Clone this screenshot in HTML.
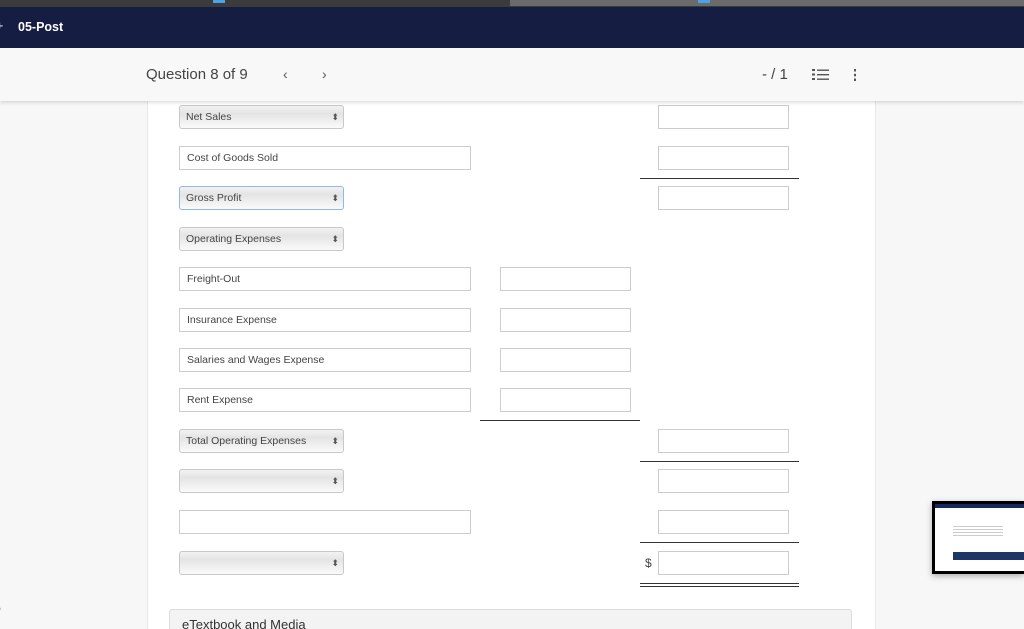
<!DOCTYPE html>
<html><head><meta charset="utf-8"><style>
html,body{margin:0;width:1024px;height:629px;overflow:hidden}
body{background:#f7f7f7;font-family:"Liberation Sans",sans-serif;position:relative}
.a{position:absolute}
.strip{left:0;top:0;width:1024px;height:7px;background:#3b3b3b}
.nav{left:0;top:7px;width:1024px;height:41px;background:#151d42;color:#fff;font-size:12.5px;font-weight:bold}
.hdr{left:0;top:48px;width:1024px;height:53px;background:#f8f8f8;box-shadow:0 2px 3px rgba(0,0,0,.12);z-index:3}
.panel{left:147px;top:100px;width:727px;height:529px;background:#fff;border-left:1px solid #e8e8e8;border-right:1px solid #e8e8e8}
.sel{height:22px;border:1px solid #c8c8c8;border-radius:3px;background:linear-gradient(#f2f2f2,#e4e4e4 35%,#fafafa);font-size:10.5px;color:#444;line-height:22px;padding-left:6px;box-sizing:content-box;width:157px}
.sel:after{content:"⬍";position:absolute;right:4px;top:0;font-size:9px;color:#555}
.txt{height:22px;border:1px solid #ccc;font-size:10.5px;color:#444;line-height:22px;padding-left:7px;box-sizing:content-box;width:283px;background:#fff}
.in{width:129px;height:22px;border:1px solid #ccc;background:#fff}
.ln{height:1px;background:#333}
</style></head><body>
<div class="a strip"></div>
<div class="a" style="left:510px;top:0;width:514px;height:6px;background:#6b6b6b"></div>
<div class="a" style="left:213px;top:0;width:12px;height:3px;background:#4aa3e8"></div>
<div class="a" style="left:698px;top:0;width:12px;height:3px;background:#4aa3e8"></div>
<div class="a nav"><span class="a" style="left:-4px;top:12px;font-weight:normal">+</span><span class="a" style="left:18px;top:13px">05-Post</span></div>
<div class="a hdr">
<span class="a" style="left:146px;top:18px;font-size:15px;color:#444">Question 8 of 9</span>
<span class="a" style="left:283px;top:18px;font-size:14px;color:#555">‹</span>
<span class="a" style="left:322px;top:18px;font-size:14px;color:#555">›</span>
<span class="a" style="left:762px;top:18px;font-size:15px;color:#444">- / 1</span>
<svg class="a" style="left:811px;top:20px" width="18" height="14"><g fill="#555"><rect x="6" y="1.5" width="12" height="1.4"/><rect x="6" y="6" width="12" height="1.4"/><rect x="6" y="10.5" width="12" height="1.4"/><rect x="1" y="1" width="3" height="2"/><rect x="1" y="5.5" width="3" height="2"/><rect x="1" y="10" width="3" height="2"/></g></svg>
<svg class="a" style="left:853px;top:20px" width="4" height="14"><g fill="#555"><rect x="1" y="1" width="2" height="2.5"/><rect x="1" y="5.8" width="2" height="2.5"/><rect x="1" y="10.5" width="2" height="2.5"/></g></svg>
</div>
<div class="a panel"></div>

<div class="a sel" style="left:179px;top:105px">Net Sales</div>
<div class="a in" style="left:658px;top:105px"></div>
<div class="a txt" style="left:179px;top:146px">Cost of Goods Sold</div>
<div class="a in" style="left:658px;top:146px"></div>
<div class="a ln" style="left:640px;top:178px;width:159px"></div>
<div class="a sel" style="left:179px;top:186px;border-color:#8fb8e8">Gross Profit</div>
<div class="a in" style="left:658px;top:186px"></div>
<div class="a sel" style="left:179px;top:227px">Operating Expenses</div>
<div class="a txt" style="left:179px;top:267px">Freight-Out</div>
<div class="a in" style="left:500px;top:267px"></div>
<div class="a txt" style="left:179px;top:308px">Insurance Expense</div>
<div class="a in" style="left:500px;top:308px"></div>
<div class="a txt" style="left:179px;top:348px">Salaries and Wages Expense</div>
<div class="a in" style="left:500px;top:348px"></div>
<div class="a txt" style="left:179px;top:388px">Rent Expense</div>
<div class="a in" style="left:500px;top:388px"></div>
<div class="a ln" style="left:480px;top:420px;width:160px"></div>
<div class="a sel" style="left:179px;top:429px">Total Operating Expenses</div>
<div class="a in" style="left:658px;top:429px"></div>
<div class="a ln" style="left:640px;top:461px;width:159px"></div>
<div class="a sel" style="left:179px;top:469px"></div>
<div class="a in" style="left:658px;top:469px"></div>
<div class="a txt" style="left:179px;top:510px"></div>
<div class="a in" style="left:658px;top:510px"></div>
<div class="a ln" style="left:640px;top:542px;width:159px"></div>
<div class="a sel" style="left:179px;top:551px"></div>
<span class="a" style="left:645px;top:556px;font-size:12px;color:#444">$</span>
<div class="a in" style="left:658px;top:551px"></div>
<div class="a ln" style="left:640px;top:583px;width:159px"></div>
<div class="a ln" style="left:640px;top:586px;width:159px"></div>
<div class="a" style="left:169px;top:609px;width:681px;height:24px;background:#f3f3f3;border:1px solid #ddd;border-radius:3px"><span class="a" style="left:12px;top:7px;font-size:13px;color:#333">eTextbook and Media</span></div>

<div class="a" style="left:932px;top:501px;width:92px;height:73px;background:#000;box-shadow:0 2px 6px rgba(0,0,0,.3)">
<div class="a" style="left:3px;top:3px;width:89px;height:67px;background:#fff">
<div class="a" style="left:0;top:0;width:89px;height:4px;background:#152a5a"></div>
<div class="a" style="left:18px;top:48px;width:71px;height:8px;background:#1c3766"></div>
<div class="a" style="left:18px;top:20px;width:50px;height:12px;background:repeating-linear-gradient(#fff 0 2px,#ccc 2px 3px)"></div>
</div></div>
<span class="a" style="left:-2px;top:598px;font-size:12px;color:#1c2a6a">,</span>
</body></html>
